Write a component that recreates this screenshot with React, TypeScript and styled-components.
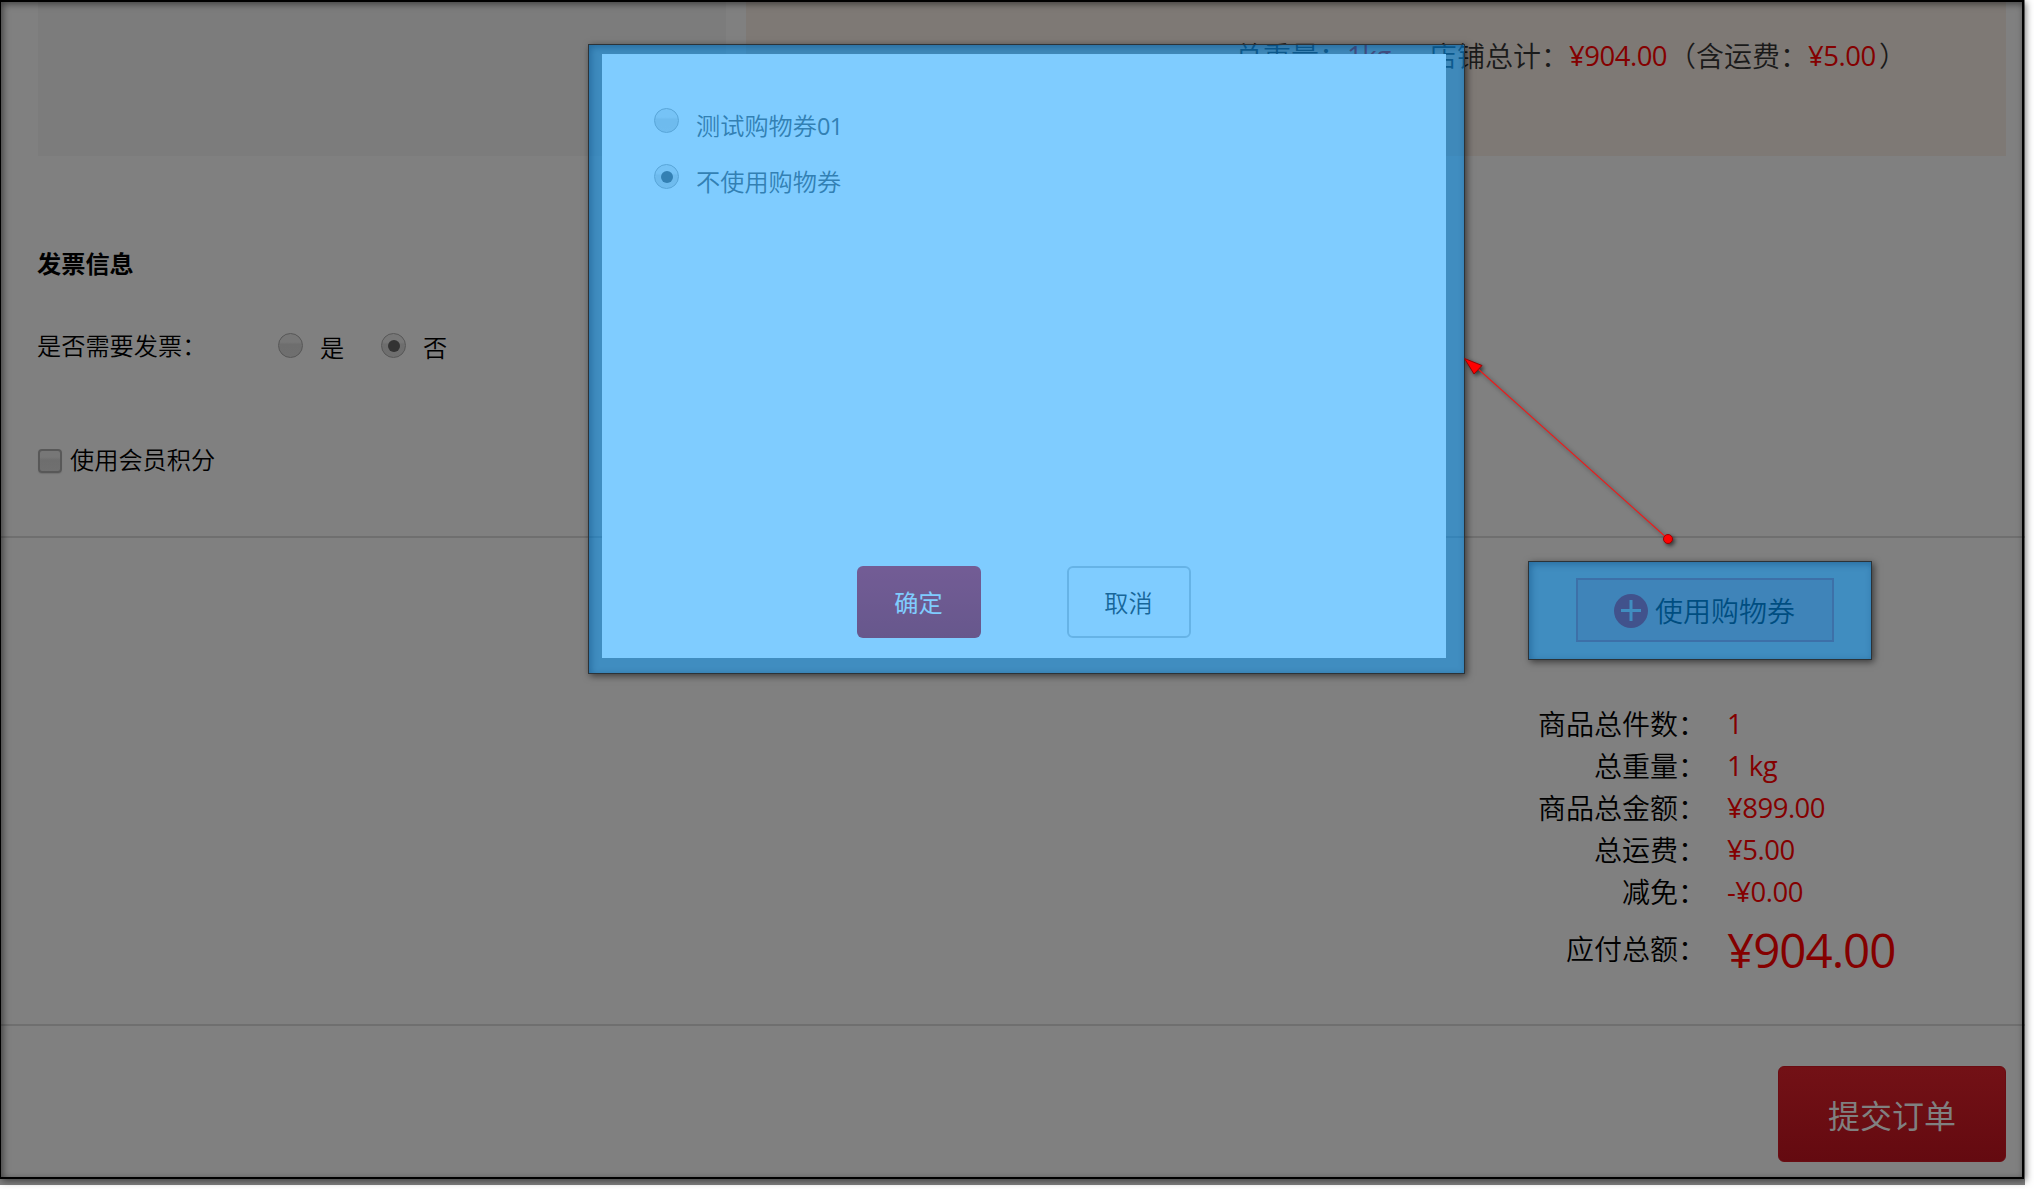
import React from "react";
import styled, { createGlobalStyle, css } from "styled-components";

const Global = createGlobalStyle`
  * { box-sizing: border-box; }
  body {
    margin: 0;
    background: #fff;
    overflow: hidden;
    font-family: "Open Sans", "Noto Sans CJK SC", sans-serif;
  }
`;

const Canvas = styled.div`
  position: relative;
  width: 2034px;
  height: 1189px;
  overflow: hidden;
  background: #fff;
`;

const Page = styled.main`
  display: flex;
  flex-direction: column;
  width: 2025px;
  height: 1185px;
  background: #808080;
  color: #000;
`;

const Cjk = styled.span`
  font-family: "Noto Sans CJK SC", sans-serif;
  font-weight: 350;
`;

const ShopRow = styled.section`
  display: flex;
  gap: 20px;
  height: 156px;
  padding: 0 19px 0 38px;
`;

const RemarkPane = styled.div`
  width: 688px;
  background: #7c7c7c;
`;

const ShopTotal = styled.div`
  display: flex;
  flex: 1;
  align-items: flex-start;
  padding: 35px 0 0 489px;
  background: #7e7975;
  color: #1a1a1a;
  font-size: 28px;
  line-height: 40px;
  white-space: nowrap;
`;

const Amount = styled.span<{ $w?: number }>`
  display: inline-block;
  ${(p) => p.$w && css`width: ${p.$w}px;`}
  padding-top: 1px;
  color: #840000;
  font-size: 27.5px;
  letter-spacing: -0.5px;
`;

const Invoice = styled.section`
  display: flex;
  flex-direction: column;
  height: 380px;
  padding: 87px 38px 0 37px;
  font-size: 24.2px;
  line-height: 40px;
`;

const Title = styled.h2`
  margin: 0;
  font: bold 24.2px/40px "Noto Sans CJK SC", sans-serif;
`;

const FieldRow = styled.div`
  display: flex;
  align-items: center;
  height: 40px;
  margin-top: 42px;
`;

const FieldLabel = styled(Cjk)`
  width: 241px;
`;

const Radio = styled.i<{ $on?: boolean; $light?: boolean }>`
  display: flex;
  flex: none;
  align-items: center;
  justify-content: center;
  width: 25px;
  height: 25px;
  border: 1px solid ${(p) => (p.$light ? "#b0b0b0" : "#575757")};
  border-radius: 50%;
  background: ${(p) =>
    p.$light
      ? "linear-gradient(#ededed 35%, #dcdcdc 45%, #dedede)"
      : "linear-gradient(#777 35%, #6e6e6e 45%, #6f6f6f)"};
  &::after {
    content: "";
    width: ${(p) => (p.$on ? 12 : 0)}px;
    height: ${(p) => (p.$on ? 12 : 0)}px;
    border-radius: 50%;
    background: ${(p) => (p.$light ? "#666" : "#333")};
  }
`;

const FieldRadio = styled(Radio)`
  margin-top: 1px;
`;

const RadioText = styled(Cjk)<{ $gap: number }>`
  width: 24px;
  padding-top: 3px;
  margin: 0 ${(p) => p.$gap}px 0 17px;
`;

const CheckRow = styled.label`
  display: flex;
  align-items: center;
  height: 40px;
  margin-top: 74px;
  padding-left: 1px;
  gap: 8px;
`;

const CheckBox = styled.i`
  width: 24px;
  height: 24px;
  margin-top: 4px;
  border: 2px solid #585858;
  border-radius: 4px;
  background: linear-gradient(#777 30%, #6e6e6e 45%, #707070);
  box-shadow: 0 1px 1px #717171;
`;

const Summary = styled.section`
  display: flex;
  flex-direction: column;
  align-items: flex-end;
  height: 490px;
  padding: 40px 19px 0 0;
  border-top: 2px solid #6f6f6f;
  border-bottom: 2px solid #6f6f6f;
`;

const VoucherButton = styled.button`
  display: flex;
  align-items: center;
  width: 258px;
  height: 64px;
  margin: 0 172px 0 0;
  padding: 0 0 0 36px;
  gap: 7px;
  border: 2px solid #7a4751;
  background: #7e6f73;
  color: #000;
  font-size: 28px;
  svg { display: block; flex: none; margin-top: 2px; }
`;

const Totals = styled.dl`
  display: grid;
  grid-template-columns: 188px 279px;
  grid-auto-rows: 42px;
  column-gap: 21px;
  margin: 61px 0 0;
  font-size: 28px;
  line-height: 42px;
`;

const TotalLabel = styled.dt<{ $last?: boolean }>`
  text-align: right;
  white-space: nowrap;
  font-family: "Noto Sans CJK SC", sans-serif;
  font-weight: 350;
  line-height: 41px;
  padding-top: ${(p) => (p.$last ? 15 : 0)}px;
`;

const TotalValue = styled.dd<{ $last?: boolean }>`
  margin: 0;
  color: #840000;
  white-space: nowrap;
  font-size: ${(p) => (p.$last ? 47.5 : 27.5)}px;
  letter-spacing: ${(p) => (p.$last ? -1 : -0.5)}px;
  padding-top: ${(p) => (p.$last ? 16 : 0)}px;
`;

const Footer = styled.footer`
  display: flex;
  justify-content: flex-end;
  padding: 40px 19px 0 0;
`;

const SubmitButton = styled.button`
  width: 228px;
  height: 96px;
  padding: 0;
  border: 1px solid #6a0c12;
  border-radius: 6px;
  background: linear-gradient(#731116, #640a10);
  color: #808080;
  font: 400 32px/1 "Noto Sans CJK SC", sans-serif;
`;

const Modal = styled.div`
  position: absolute;
  left: 602px;
  top: 54px;
  display: flex;
  flex-direction: column;
  width: 844px;
  height: 604px;
  padding: 52px 0 20px 52px;
  background: #fff;
  color: #666;
  font-size: 24px;
`;

const Option = styled.label`
  display: flex;
  align-items: flex-start;
  height: 56px;
  padding-top: 2px;
  gap: 17px;
`;

const OptionText = styled.span`
  font: 350 24.2px/34px "Noto Sans CJK SC", sans-serif;
`;

const Digits = styled.span`
  font-family: "Open Sans", sans-serif;
  font-size: 23.5px;
  font-weight: 400;
  letter-spacing: -0.6px;
`;

const Actions = styled.div`
  display: flex;
  gap: 86px;
  margin: auto 0 0 203px;
`;

const ActionButton = styled.button<{ $primary?: boolean }>`
  width: 124px;
  height: 72px;
  padding: 0 1px 0 0;
  border: 2px solid ${(p) => (p.$primary ? "transparent" : "#ccc")};
  border-radius: 6px;
  background: ${(p) => (p.$primary ? "linear-gradient(#e61f2b, #ce1519) border-box" : "#fff")};
  color: ${(p) => (p.$primary ? "#fff" : "#333")};
  font: ${(p) => (p.$primary ? 400 : 350)} 24.2px/1 "Noto Sans CJK SC", sans-serif;
`;

const Highlight = styled.div<{ $x: number; $y: number; $w: number; $h: number }>`
  position: absolute;
  left: ${(p) => p.$x}px;
  top: ${(p) => p.$y}px;
  width: ${(p) => p.$w}px;
  height: ${(p) => p.$h}px;
  border: 1px solid #2c3338;
  background: rgba(0, 153, 255, 0.5);
  box-shadow: 2px 2px 7px rgba(0, 0, 0, 0.55);
`;

const EdgeShade = styled.div<{ $x: number; $y: number; $w: number; $h: number }>`
  position: absolute;
  left: ${(p) => p.$x}px;
  top: ${(p) => p.$y}px;
  width: ${(p) => p.$w}px;
  height: ${(p) => p.$h}px;
  box-shadow: inset 2px 2px 7px rgba(0, 60, 110, 0.4);
`;

const ArrowLayer = styled.svg`
  position: absolute;
  left: 1455px;
  top: 350px;
  overflow: visible;
  filter: drop-shadow(2px 2px 2px rgba(0, 0, 0, 0.6));
`;

const Frame = styled.div`
  position: absolute;
  left: 0;
  top: 0;
  width: 2024px;
  height: 1179px;
  border: 2px solid #000;
  border-left-width: 1px;
  box-shadow: inset 2px 2px 7px rgba(0, 0, 0, 0.5), 2px 2px 7px rgba(0, 0, 0, 0.5);
`;

const totals = [
  ["商品总件数：", "1"],
  ["总重量：", "1 kg"],
  ["商品总金额：", "¥899.00"],
  ["总运费：", "¥5.00"],
  ["减免：", "-¥0.00"],
  ["应付总额：", "¥904.00"],
];

export default function App() {
  return (
    <Canvas>
      <Global />
      <Page>
        <ShopRow>
          <RemarkPane />
          <ShopTotal>
            <Cjk>总重量：</Cjk>
            <Amount $w={82}>1kg</Amount>
            <Cjk>店铺总计：</Cjk>
            <Amount $w={99}>¥904.00</Amount>
            <Cjk>（含运费：</Cjk>
            <Amount $w={71}>¥5.00</Amount>
            <Cjk>）</Cjk>
          </ShopTotal>
        </ShopRow>
        <Invoice>
          <Title>发票信息</Title>
          <FieldRow>
            <FieldLabel>是否需要发票：</FieldLabel>
            <FieldRadio />
            <RadioText $gap={37}>是</RadioText>
            <FieldRadio $on />
            <RadioText $gap={0}>否</RadioText>
          </FieldRow>
          <CheckRow>
            <CheckBox />
            <Cjk>使用会员积分</Cjk>
          </CheckRow>
        </Invoice>
        <Summary>
          <VoucherButton>
            <svg width="34" height="34" viewBox="0 0 34 34">
              <circle cx="17" cy="17" r="17" fill="#820b19" />
              <path d="M7 16.5H27M17 6V27" stroke="#808080" strokeWidth="3" />
            </svg>
            <Cjk>使用购物券</Cjk>
          </VoucherButton>
          <Totals>
            {totals.map(([label, value], i) => (
              <React.Fragment key={label}>
                <TotalLabel $last={i === 5}>{label}</TotalLabel>
                <TotalValue $last={i === 5}>{value}</TotalValue>
              </React.Fragment>
            ))}
          </Totals>
        </Summary>
        <Footer>
          <SubmitButton>提交订单</SubmitButton>
        </Footer>
      </Page>

      <Modal>
        <Option>
          <Radio $light />
          <OptionText>测试购物券<Digits>01</Digits></OptionText>
        </Option>
        <Option>
          <Radio $light $on />
          <OptionText>不使用购物券</OptionText>
        </Option>
        <Actions>
          <ActionButton $primary>确定</ActionButton>
          <ActionButton>取消</ActionButton>
        </Actions>
      </Modal>

      <Highlight $x={588} $y={44} $w={877} $h={630} />
      <EdgeShade $x={589} $y={45} $w={875} $h={628} />
      <Highlight $x={1528} $y={561} $w={344} $h={99} />
      <EdgeShade $x={1529} $y={562} $w={342} $h={97} />
      <ArrowLayer width="220" height="200">
        <path d="M22 18L213 189" stroke="#f01818" strokeWidth="1.1" />
        <path d="M9.500 8.500L27 15.500L19 24Z" fill="#f00" stroke="#900" strokeWidth="1" />
        <circle cx="213" cy="189" r="4.500" fill="#f00" stroke="#900" strokeWidth="1" />
      </ArrowLayer>
      <Frame />
    </Canvas>
  );
}
